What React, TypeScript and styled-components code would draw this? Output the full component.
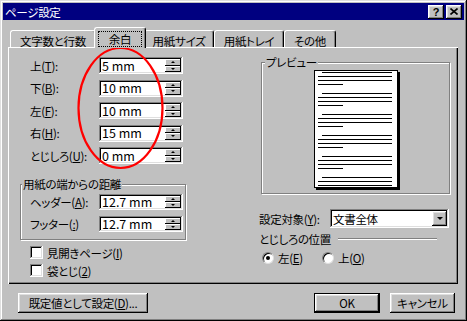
import React from 'react';
import styled, { createGlobalStyle, css } from 'styled-components';

const GlobalStyle = createGlobalStyle`
  html, body {
    margin: 0;
    padding: 0;
    background: #c0c0c0;
  }
  body {
    font-family: 'Noto Sans CJK JP', 'Noto Sans', sans-serif;
    font-size: 11.5px;
    letter-spacing: -0.3px;
    color: #000;
    font-feature-settings: 'palt';
  }
  * {
    box-sizing: border-box;
  }
`;

const raised = css`
  box-shadow: inset -1px -1px #000, inset 1px 1px #fff, inset -2px -2px #808080, inset 2px 2px #dfdfdf;
`;

const sunken = css`
  box-shadow: inset -1px -1px #fff, inset 1px 1px #808080, inset -2px -2px #dfdfdf, inset 2px 2px #000;
`;

const Window = styled.div`
  position: relative;
  width: 467px;
  height: 321px;
  padding: 3px;
  display: flex;
  flex-direction: column;
  background: #c0c0c0;
  box-shadow: inset -1px -1px #000, inset 1px 1px #dfdfdf, inset -2px -2px #808080, inset 2px 2px #fff;
`;

const TitleBar = styled.div`
  height: 17px;
  display: flex;
  align-items: center;
  padding: 0 2px;
  background: #000080;
  color: #fff;
  line-height: 14px;
`;

const TitleButtons = styled.div`
  display: flex;
  gap: 2px;
  margin-left: auto;
`;

const TitleButton = styled.div`
  width: 16px;
  height: 14px;
  display: flex;
  align-items: center;
  justify-content: center;
  background: #c0c0c0;
  color: #000;
  font-family: 'Liberation Sans', sans-serif;
  font-weight: bold;
  font-size: 11px;
  ${raised}
`;

const Content = styled.div`
  margin: 7px 6px 0 5px;
`;

const TabRow = styled.div`
  height: 20px;
  display: flex;
  align-items: flex-end;
  padding-left: 2px;
`;

const Tab = styled.div<{ $active?: boolean; $w: number }>`
  position: relative;
  width: ${(p) => p.$w}px;
  height: ${(p) => (p.$active ? 21 : 17)}px;
  margin: ${(p) => (p.$active ? '0 -2px -1px' : '0')};
  z-index: ${(p) => (p.$active ? 1 : 0)};
  display: flex;
  justify-content: center;
  align-items: flex-start;
  padding-top: ${(p) => (p.$active ? 4 : 3)}px;
  background: #c0c0c0;
  border-top: 1px solid #fff;
  border-left: 1px solid #fff;
  border-right: 1px solid #000;
  border-radius: 3px 3px 0 0;
  box-shadow: inset -1px 0 #808080;
  line-height: 14px;
  white-space: nowrap;
`;

const FocusLabel = styled.span`
  height: 16px;
  margin-top: -1px;
  padding: 0 10px;
  border: 1px dotted #000;
  line-height: 14px;
`;

const Panel = styled.div`
  height: 237px;
  display: flex;
  gap: 73px;
  padding: 10px 0 0 12px;
  background: #c0c0c0;
  box-shadow: inset 1px 1px #fff, inset -1px -1px #000, inset -2px -2px #808080;
`;

const LeftColumn = styled.div`
  width: 166px;
  display: flex;
  flex-direction: column;
`;

const MarginList = styled.div`
  display: flex;
  flex-direction: column;
  gap: 5.5px;
  padding-left: 10px;
`;

const FieldRow = styled.div<{ $h: number }>`
  height: ${(p) => p.$h}px;
  display: flex;
  align-items: center;
`;

const FieldLabel = styled.span`
  width: 69px;
  line-height: 14px;
  white-space: nowrap;
`;

const SpinBox = styled.div<{ $h: number }>`
  width: 84px;
  height: ${(p) => p.$h}px;
  display: flex;
  padding: 2px;
  background: #fff;
  ${sunken}
`;

const SpinValue = styled.span`
  flex: 1;
  display: flex;
  align-items: center;
  padding-left: 1px;
  font-size: 12.5px;
  letter-spacing: 0;
  line-height: 12px;
`;

const SpinButtons = styled.div`
  width: 16px;
  display: flex;
  flex-direction: column;
`;

const SpinButton = styled.div`
  flex: 1;
  display: flex;
  align-items: center;
  justify-content: center;
  background: #c0c0c0;
  box-shadow: inset -1px -1px #000, inset 1px 1px #fff;
`;

const Arrow = styled.span<{ $dir: 'up' | 'down'; $size: number }>`
  width: 0;
  height: 0;
  border-left: ${(p) => p.$size}px solid transparent;
  border-right: ${(p) => p.$size}px solid transparent;
  ${(p) =>
    p.$dir === 'up'
      ? `border-bottom: ${p.$size}px solid #000;`
      : `border-top: ${p.$size}px solid #000;`}
`;

const GroupBox = styled.div<{ $w: number; $h: number }>`
  position: relative;
  width: ${(p) => p.$w}px;
  height: ${(p) => p.$h}px;
  border: 1px solid #808080;
  box-shadow: inset 1px 1px #fff, 1px 1px 0 #fff;
`;

const GroupTitle = styled.span<{ $indent: number }>`
  position: absolute;
  top: -8px;
  left: ${(p) => p.$indent}px;
  padding: 0 1px;
  background: #c0c0c0;
  line-height: 14px;
  white-space: nowrap;
`;

const DistanceBox = styled(GroupBox)`
  margin-top: 20px;
  display: flex;
  flex-direction: column;
  gap: 6px;
  padding: 9px 0 0 9px;
`;

const CheckList = styled.div`
  display: flex;
  flex-direction: column;
  gap: 5px;
  margin-top: 6px;
  padding-left: 10px;
`;

const CheckRow = styled.label`
  height: 13px;
  display: flex;
  align-items: center;
  gap: 4px;
  line-height: 14px;
`;

const CheckBox = styled.span`
  width: 13px;
  height: 13px;
  background: #fff;
  ${sunken}
`;

const RightColumn = styled.div`
  width: 191px;
  display: flex;
  flex-direction: column;
`;

const PreviewBox = styled(GroupBox)`
  margin: 5px 0 0 2px;
  display: flex;
  justify-content: center;
  padding-top: 7px;
`;

const Page = styled.div`
  width: 84px;
  height: 118px;
  display: flex;
  flex-direction: column;
  gap: 8px;
  padding: 1px 5px 0 3px;
  overflow: hidden;
  background: #fff;
  border: 1px solid #000;
  box-shadow: 2px 2px 0 #000;
`;

const Paragraph = styled.div`
  display: flex;
  flex-direction: column;
  gap: 3px;
`;

const TextLine = styled.div<{ $kind: 'indent' | 'full' | 'short' }>`
  height: 1px;
  background: #000;
  margin-left: ${(p) => (p.$kind === 'indent' ? 4 : 0)}px;
  width: ${(p) => (p.$kind === 'short' ? '25px' : 'auto')};
`;

const TargetRow = styled.div`
  display: flex;
  align-items: center;
  margin-top: 15px;
`;

const TargetLabel = styled.span`
  width: 71px;
  line-height: 14px;
  white-space: nowrap;
`;

const Select = styled.div`
  width: 119px;
  height: 19px;
  display: flex;
  align-items: center;
  padding: 2px;
  background: #fff;
  ${sunken}
`;

const SelectValue = styled.span`
  flex: 1;
  padding-left: 1px;
  line-height: 14px;
`;

const SelectButton = styled.div`
  width: 15px;
  height: 15px;
  display: flex;
  align-items: center;
  justify-content: center;
  background: #c0c0c0;
  ${raised}
`;

const SectionRow = styled.div`
  height: 14px;
  display: flex;
  align-items: center;
  margin-top: 4px;
  line-height: 14px;
`;

const EtchedRule = styled.div`
  width: 99px;
  margin-left: auto;
  margin-right: 13px;
  border-top: 1px solid #808080;
  border-bottom: 1px solid #fff;
`;

const RadioRow = styled.div`
  display: flex;
  margin-top: 6px;
  padding-left: 3px;
`;

const RadioOption = styled.label`
  min-width: 60px;
  height: 12px;
  display: flex;
  align-items: center;
  gap: 4px;
  line-height: 14px;
`;

const Radio = styled.span<{ $checked?: boolean }>`
  width: 12px;
  height: 12px;
  display: flex;
  align-items: center;
  justify-content: center;
  border-radius: 50%;
  background: #fff;
  border: 1px solid;
  border-color: #808080 #dfdfdf #dfdfdf #808080;
  box-shadow: inset 1px 1px #000;

  &::after {
    content: '';
    width: 4px;
    height: 4px;
    border-radius: 50%;
    background: ${(p) => (p.$checked ? '#000' : 'transparent')};
  }
`;

const Footer = styled.div`
  display: flex;
  gap: 10px;
  margin-top: 9px;
  padding: 0 9px 0 15px;
`;

const Button = styled.div<{ $w: number; $default?: boolean }>`
  width: ${(p) => p.$w}px;
  height: 20px;
  display: flex;
  align-items: center;
  justify-content: center;
  background: #c0c0c0;
  line-height: 14px;
  white-space: nowrap;
  ${(p) =>
    p.$default
      ? 'box-shadow: inset 0 0 0 1px #000, inset -2px -2px #000, inset 2px 2px #fff, inset -3px -3px #808080, inset 3px 3px #dfdfdf;'
      : raised}
`;

const Spacer = styled.div`
  flex: 1;
`;

const Annotation = styled.svg`
  position: absolute;
  left: 0;
  top: 0;
  pointer-events: none;
`;

const tabs = [
  { label: '文字数と行数', w: 86 },
  { label: '余白', w: 52, active: true },
  { label: '用紙サイズ', w: 70 },
  { label: '用紙トレイ', w: 70 },
  { label: 'その他', w: 52 },
];

const margins = [
  { label: '上', key: 'T', value: '5 mm' },
  { label: '下', key: 'B', value: '10 mm' },
  { label: '左', key: 'F', value: '10 mm' },
  { label: '右', key: 'H', value: '15 mm' },
  { label: 'とじしろ', key: 'U', value: '0 mm' },
];

const distances = [
  { label: 'ヘッダー', key: 'A', value: '12.7 mm', colon: true },
  { label: 'フッター', key: ':', value: '12.7 mm', colon: false },
];

type LineKind = 'indent' | 'full' | 'short';
const fullParagraph: LineKind[] = ['indent', 'full', 'full', 'short'];
const paragraphs: LineKind[][] = [
  fullParagraph,
  fullParagraph,
  fullParagraph,
  fullParagraph,
  fullParagraph,
  ['indent', 'full', 'full'],
];

function Spinner({ value, h }: { value: string; h: number }) {
  return (
    <SpinBox $h={h}>
      <SpinValue>{value}</SpinValue>
      <SpinButtons>
        <SpinButton>
          <Arrow $dir="up" $size={2} />
        </SpinButton>
        <SpinButton>
          <Arrow $dir="down" $size={2} />
        </SpinButton>
      </SpinButtons>
    </SpinBox>
  );
}

export default function App() {
  return (
    <>
      <GlobalStyle />
      <Window>
        <TitleBar>
          <span>ページ設定</span>
          <TitleButtons>
            <TitleButton>?</TitleButton>
            <TitleButton>
              <svg width="8" height="7" viewBox="0 0 8 7">
                <path d="M0.5 0.5 L7.5 6.5 M7.5 0.5 L0.5 6.5" stroke="#000" strokeWidth="1.6" />
              </svg>
            </TitleButton>
          </TitleButtons>
        </TitleBar>

        <Content>
          <TabRow>
            {tabs.map((t) => (
              <Tab key={t.label} $w={t.w} $active={t.active}>
                {t.active ? <FocusLabel>{t.label}</FocusLabel> : t.label}
              </Tab>
            ))}
          </TabRow>

          <Panel>
            <LeftColumn>
              <MarginList>
                {margins.map((m) => (
                  <FieldRow key={m.key} $h={17}>
                    <FieldLabel>
                      {m.label}(<u>{m.key}</u>):
                    </FieldLabel>
                    <Spinner value={m.value} h={17} />
                  </FieldRow>
                ))}
              </MarginList>

              <DistanceBox $w={166} $h={56}>
                <GroupTitle $indent={1}>用紙の端からの距離</GroupTitle>
                {distances.map((d) => (
                  <FieldRow key={d.label} $h={16}>
                    <FieldLabel>
                      {d.label}(<u>{d.key}</u>){d.colon ? ':' : ''}
                    </FieldLabel>
                    <Spinner value={d.value} h={16} />
                  </FieldRow>
                ))}
              </DistanceBox>

              <CheckList>
                <CheckRow>
                  <CheckBox />
                  <span>
                    見開きページ(<u>I</u>)
                  </span>
                </CheckRow>
                <CheckRow>
                  <CheckBox />
                  <span>
                    袋とじ(<u>2</u>)
                  </span>
                </CheckRow>
              </CheckList>
            </LeftColumn>

            <RightColumn>
              <PreviewBox $w={189} $h={132}>
                <GroupTitle $indent={3}>プレビュー</GroupTitle>
                <Page>
                  {paragraphs.map((p, i) => (
                    <Paragraph key={i}>
                      {p.map((kind, j) => (
                        <TextLine key={j} $kind={kind} />
                      ))}
                    </Paragraph>
                  ))}
                </Page>
              </PreviewBox>

              <TargetRow>
                <TargetLabel>
                  設定対象(<u>Y</u>):
                </TargetLabel>
                <Select>
                  <SelectValue>文書全体</SelectValue>
                  <SelectButton>
                    <Arrow $dir="down" $size={3} />
                  </SelectButton>
                </Select>
              </TargetRow>

              <SectionRow>
                <span>とじしろの位置</span>
                <EtchedRule />
              </SectionRow>

              <RadioRow>
                <RadioOption>
                  <Radio $checked />
                  <span>
                    左(<u>E</u>)
                  </span>
                </RadioOption>
                <RadioOption>
                  <Radio />
                  <span>
                    上(<u>O</u>)
                  </span>
                </RadioOption>
              </RadioRow>
            </RightColumn>
          </Panel>
        </Content>

        <Footer>
          <Button $w={130}>
            既定値として設定(<u>D</u>)...
          </Button>
          <Spacer />
          <Button $w={66} $default>
            OK
          </Button>
          <Button $w={65}>キャンセル</Button>
        </Footer>

        <Annotation width="467" height="321" viewBox="0 0 467 321">
          <ellipse cx="120.5" cy="108" rx="42" ry="60" fill="none" stroke="#f00" strokeWidth="2.2" />
        </Annotation>
      </Window>
    </>
  );
}
